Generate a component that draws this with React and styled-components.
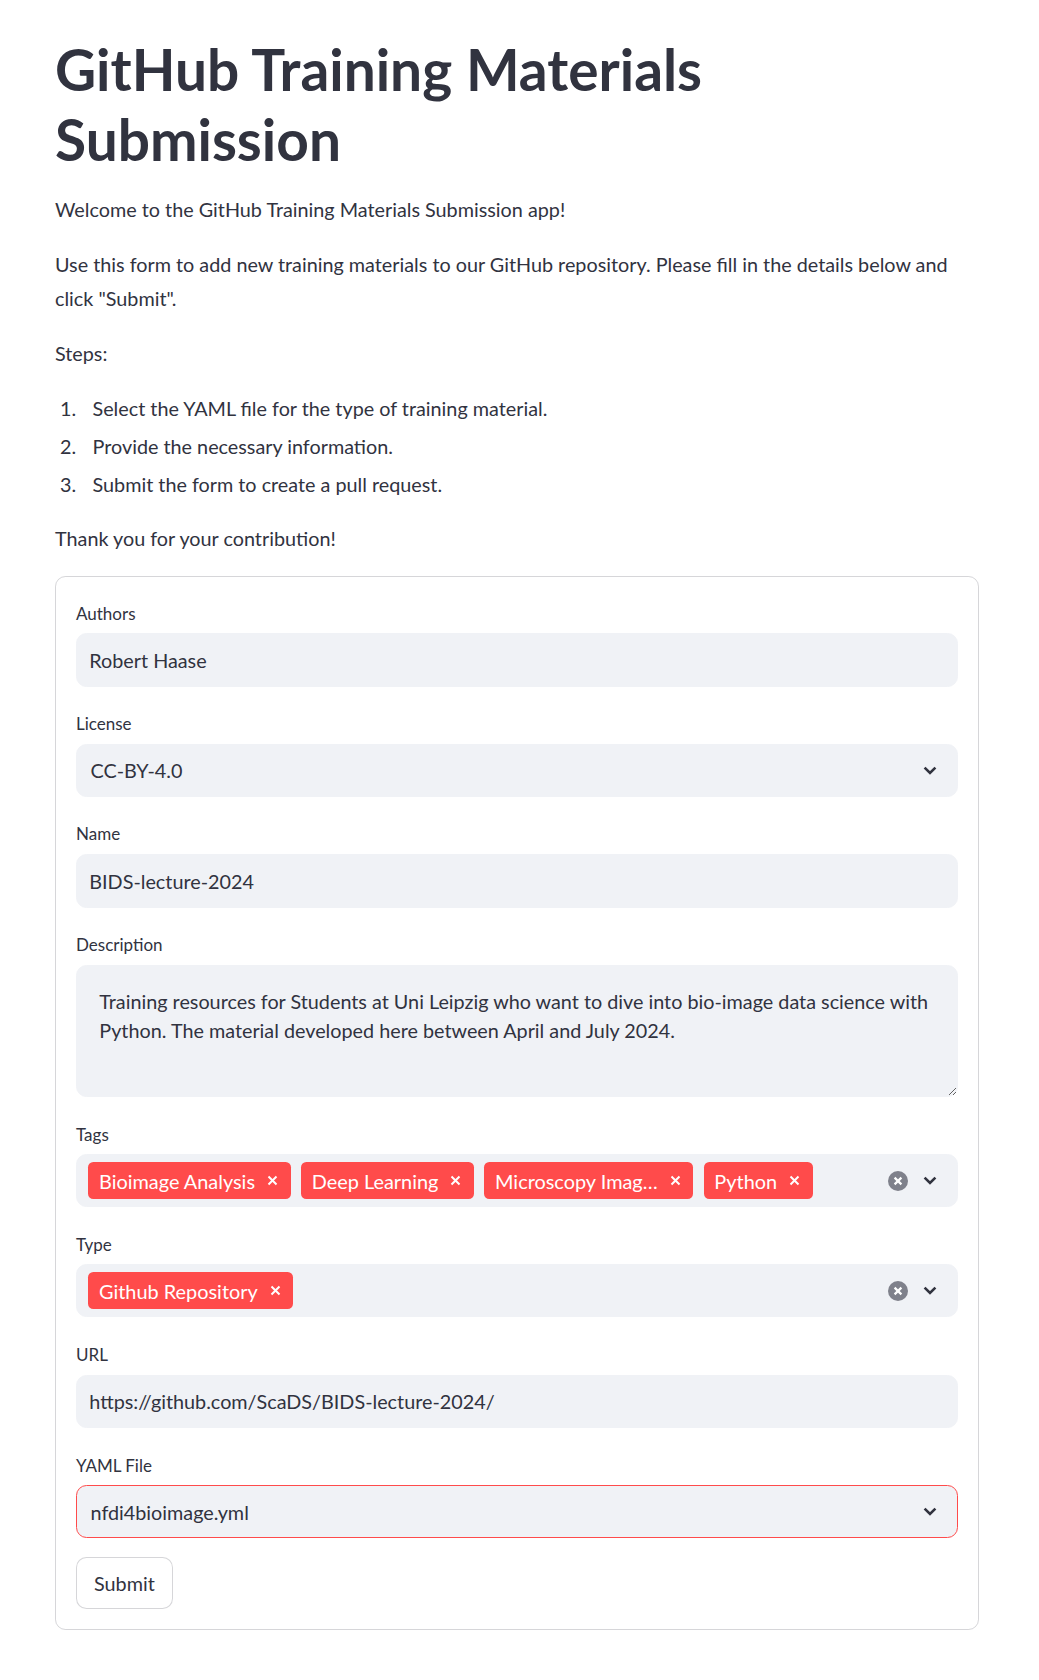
import React from 'react';
import styled, { createGlobalStyle } from 'styled-components';

const GlobalStyle = createGlobalStyle`
  html, body {
    margin: 0;
    padding: 0;
    background: #ffffff;
  }
  body {
    font-family: Lato, "Open Sans", sans-serif;
    color: #31333f;
  }
  *, *::before, *::after {
    box-sizing: border-box;
  }
`;

const Main = styled.main`
  width: 924px;
  margin-left: 55px;
  padding: 34px 0 48px;
`;

const Title = styled.h1`
  max-width: 860px;
  margin: 0 0 18px;
  font-size: 56.8px;
  font-weight: 700;
  line-height: 70px;
  color: #31333f;
`;

const Text = styled.p`
  margin: 0 0 21px;
  font-size: 19.8px;
  line-height: 34px;
`;

const Steps = styled.ol`
  margin: 0 0 20px;
  padding: 0;
  list-style: none;
  counter-reset: step;
`;

const Step = styled.li`
  display: flex;
  font-size: 19.8px;
  line-height: 34px;
  margin-top: 4px;
  counter-increment: step;

  &:first-child {
    margin-top: 0;
  }

  &::before {
    content: counter(step) ".";
    flex: none;
    width: 37.5px;
    padding-left: 5px;
  }
`;

const Form = styled.form`
  border: 1px solid rgba(49, 51, 63, 0.2);
  border-radius: 10.5px;
  padding: 20px;
  display: flex;
  flex-direction: column;
  gap: 21.33px;
`;

const Field = styled.div`
  display: flex;
  flex-direction: column;
`;

const Label = styled.label`
  height: 32px;
  margin-bottom: 4.3px;
  display: flex;
  align-items: center;
  font-size: 17px;
  color: #31333f;
`;

const Box = styled.div`
  position: relative;
  display: flex;
  align-items: center;
  height: 52.4px;
  background: #f0f2f6;
  border: 1px solid ${(p) => (p.focused ? '#ff4b4b' : '#f0f2f6')};
  border-radius: 10.5px;
  padding: 0 20px 0 ${(p) => p.pl || 14}px;
`;

const TextInput = styled.input`
  height: 53.3px;
  width: 100%;
  background: #f0f2f6;
  border: 1px solid #f0f2f6;
  border-radius: 10.5px;
  padding: 0 12.3px;
  font-family: inherit;
  font-size: 19.8px;
  color: #31333f;
  outline: none;
`;

const TextArea = styled.textarea`
  height: 131.7px;
  width: 100%;
  background: #f0f2f6;
  border: 1px solid #f0f2f6;
  border-radius: 10.5px;
  padding: 21px 12px 21px 22.3px;
  font-family: inherit;
  font-size: 19.8px;
  line-height: 28.5px;
  color: #31333f;
  resize: vertical;
  outline: none;
`;

const Value = styled.span`
  flex: 1;
  font-size: 19.8px;
  color: #31333f;
`;

const Tags = styled.div`
  flex: 1;
  display: flex;
  align-items: center;
  gap: 10.5px;
`;

const Tag = styled.span`
  display: inline-flex;
  align-items: center;
  gap: 12px;
  height: 36.7px;
  padding: 0 12.5px 0 10.7px;
  border-radius: 5.3px;
  background: #ff4b4b;
  color: #ffffff;
  font-size: 19.9px;
  white-space: nowrap;
`;

const Icons = styled.div`
  display: flex;
  align-items: center;
  gap: ${(p) => (p.clear ? 14.7 : 0)}px;
`;

const SubmitButton = styled.button`
  align-self: flex-start;
  margin-top: -2px;
  height: 52px;
  padding: 0 17px;
  background: #ffffff;
  border: 1px solid rgba(49, 51, 63, 0.2);
  border-radius: 10.5px;
  font-family: inherit;
  font-size: 19.8px;
  color: #31333f;
  cursor: pointer;
`;

const Chevron = () => (
  <svg width="14" height="9" viewBox="0 0 14 9">
    <path d="M1.6 1.6 L7 7 L12.4 1.6" fill="none" stroke="#31333f" strokeWidth="2.6" />
  </svg>
);

const ClearIcon = () => (
  <svg width="20" height="20" viewBox="0 0 20 20">
    <circle cx="10" cy="10" r="10" fill="#7f818b" />
    <path d="M6.6 6.6 L13.4 13.4 M13.4 6.6 L6.6 13.4" stroke="#ffffff" strokeWidth="2.2" />
  </svg>
);

const TagClose = () => (
  <svg width="11" height="11" viewBox="0 0 11 11">
    <path d="M1.5 1.5 L9.5 9.5 M9.5 1.5 L1.5 9.5" stroke="#ffffff" strokeWidth="2" />
  </svg>
);

const Select = ({ value, focused }) => (
  <Box focused={focused} pl={13.5}>
    <Value>{value}</Value>
    <Icons>
      <Chevron />
    </Icons>
  </Box>
);

const MultiSelect = ({ values }) => (
  <Box pl={11.3}>
    <Tags>
      {values.map((v) => (
        <Tag key={v}>
          {v}
          <TagClose />
        </Tag>
      ))}
    </Tags>
    <Icons clear>
      <ClearIcon />
      <Chevron />
    </Icons>
  </Box>
);

const App = () => {
  return (
    <Main>
      <GlobalStyle />
      <Title>GitHub Training Materials Submission</Title>
      <Text>Welcome to the GitHub Training Materials Submission app!</Text>
      <Text>
        Use this form to add new training materials to our GitHub repository. Please fill in the
        details below and click "Submit".
      </Text>
      <Text>Steps:</Text>
      <Steps>
        <Step>Select the YAML file for the type of training material.</Step>
        <Step>Provide the necessary information.</Step>
        <Step>Submit the form to create a pull request.</Step>
      </Steps>
      <Text>Thank you for your contribution!</Text>

      <Form onSubmit={(e) => e.preventDefault()}>
        <Field>
          <Label>Authors</Label>
          <TextInput readOnly defaultValue="Robert Haase" />
        </Field>
        <Field>
          <Label>License</Label>
          <Select value="CC-BY-4.0" />
        </Field>
        <Field>
          <Label>Name</Label>
          <TextInput readOnly defaultValue="BIDS-lecture-2024" />
        </Field>
        <Field>
          <Label>Description</Label>
          <TextArea
            readOnly
            defaultValue="Training resources for Students at Uni Leipzig who want to dive into bio-image data science with Python. The material developed here between April and July 2024."
          />
        </Field>
        <Field>
          <Label>Tags</Label>
          <MultiSelect
            values={['Bioimage Analysis', 'Deep Learning', 'Microscopy Imag…', 'Python']}
          />
        </Field>
        <Field>
          <Label>Type</Label>
          <MultiSelect values={['Github Repository']} />
        </Field>
        <Field>
          <Label>URL</Label>
          <TextInput readOnly defaultValue="https://github.com/ScaDS/BIDS-lecture-2024/" />
        </Field>
        <Field>
          <Label>YAML File</Label>
          <Select value="nfdi4bioimage.yml" focused />
        </Field>
        <SubmitButton type="submit">Submit</SubmitButton>
      </Form>
    </Main>
  );
};

export default App;
